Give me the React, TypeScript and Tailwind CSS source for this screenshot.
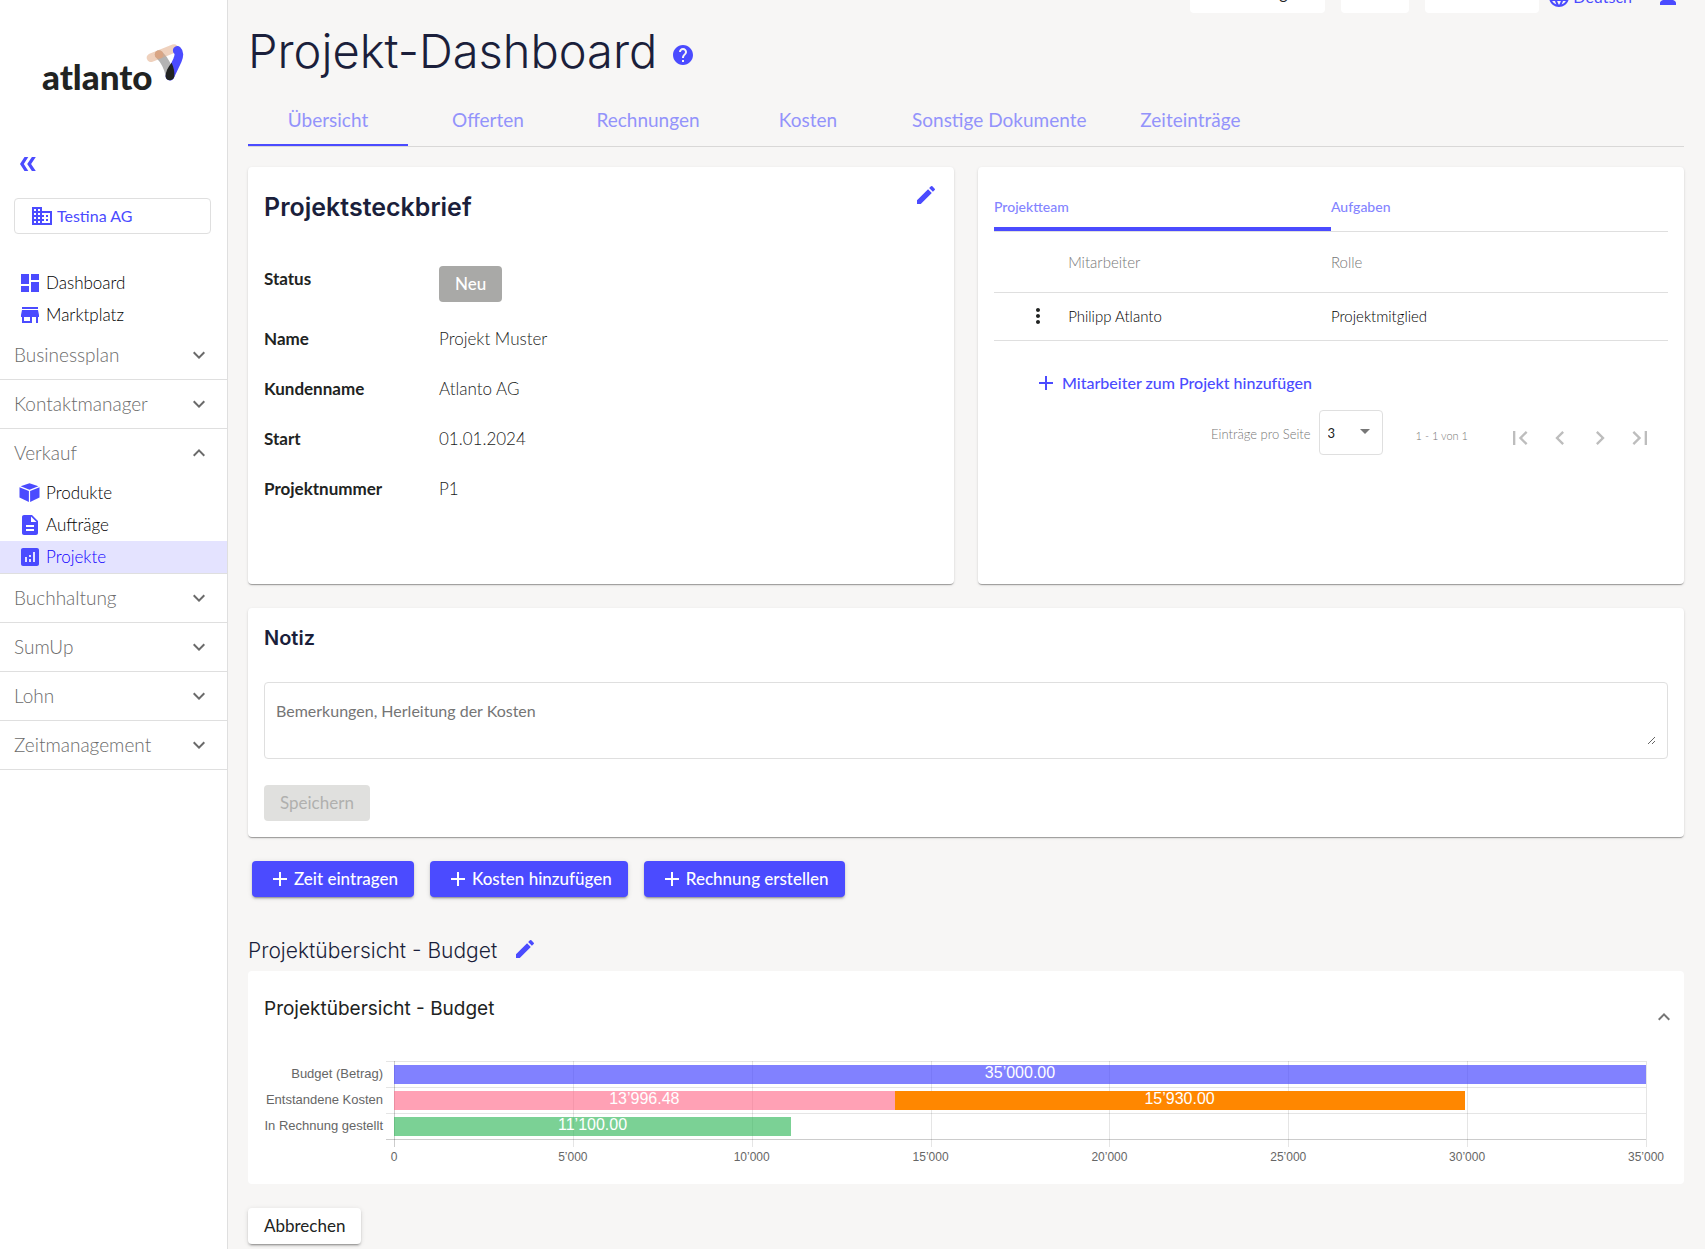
import { useState } from "react";
import type { ComponentType, ReactNode } from "react";
import {
  MdAdd,
  MdAnalytics,
  MdArrowDropDown,
  MdChevronLeft,
  MdChevronRight,
  MdDashboard,
  MdDescription,
  MdDomain,
  MdEdit,
  MdExpandLess,
  MdExpandMore,
  MdFirstPage,
  MdHelp,
  MdLanguage,
  MdLastPage,
  MdMoreVert,
  MdPerson,
  MdStore,
} from "react-icons/md";

type Icon = ComponentType<{ className?: string }>;

function CubeIcon({ className }: { className?: string }) {
  return (
    <svg viewBox="0 0 24 24" className={className} fill="currentColor" aria-hidden="true">
      <path d="M11.500 2.200 2.600 5.200 11.500 8.800l8.900-3.600z" />
      <path d="M1.500 6.200v10.400l9.400 4.400V9.900z" />
      <path d="M21.500 6.200v10.400l-9.400 4.400V9.900z" />
    </svg>
  );
}

function CollapseIcon() {
  return (
    <svg viewBox="0 0 24 24" className="h-6 w-6" fill="currentColor" aria-hidden="true">
      <path d="M8.500 5h3.800L7.800 12l4.500 7H8.500L4 12z" />
      <path d="M15.900 5h3.900l-4.700 7 4.700 7h-3.900l-4.700-7z" />
    </svg>
  );
}

function Logo() {
  return (
    <div className="flex pt-11 pl-[42px]">
      <span className="pt-3 text-[35px] leading-[40px] font-black text-[#212322]">atlanto</span>
      <svg viewBox="0 0 38 38" className="-ml-[7px] h-[38px] w-[38px]" fill="none" strokeLinecap="round" aria-hidden="true">
        <path d="M13 10.500C18.500 16 22.500 23 24 32" stroke="#b3b3b3" strokeWidth="8.600" />
        <path d="M5 13.700 28 4.500" stroke="#e0a37c" strokeOpacity="0.5" strokeWidth="8.600" />
        <path d="M13 10.500v.010" stroke="#e0a37c" strokeOpacity="0.7" strokeWidth="8.200" />
        <path d="M31.300 6.500C34 9 33 12.500 31.300 16.500L24 32" stroke="#4b4bff" strokeWidth="8.800" />
        <path d="M25.600 18.700c-3.800 4.500-6 9-6 13.500 0 5.400 7.800 5.400 8.700.3.500-4-.500-9.500-2.700-13.800z" fill="#212322" />
      </svg>
    </div>
  );
}

function NavItem({ label, icon: Icon, active }: { label: string; icon: Icon; active?: boolean }) {
  return (
    <a
      href="#"
      className={`flex h-8 items-center gap-1 pl-[18px] text-[17px] leading-6 ${
        active ? "bg-[#e4e3ff] text-[#0f00ff]" : "text-black"
      }`}
    >
      <Icon className="h-6 w-6 text-[#4b4bff]" />
      {label}
    </a>
  );
}

function NavSection({ label, open, children }: { label: string; open?: boolean; children?: ReactNode }) {
  const Chevron = open ? MdExpandLess : MdExpandMore;
  return (
    <div className="border-b border-[#dfdfdf]">
      <button className="flex h-12 w-full items-center justify-between pr-4 pl-[14px] text-[19px] leading-6 text-[#6b6b6b]">
        {label}
        <Chevron className="h-6 w-6 text-[#6a6a6a]" />
      </button>
      {children}
    </div>
  );
}

function Sidebar() {
  return (
    <aside className="w-[228px] shrink-0 border-r border-[#dfdfdf] bg-white font-light">
      <Logo />
      <button aria-label="Menü einklappen" className="mt-14 ml-4 block text-[#4b4bff]">
        <CollapseIcon />
      </button>
      <button className="mt-[22px] ml-[14px] flex h-9 w-[197px] items-center gap-[3px] rounded border border-[#dfdfdf] pl-[15px] text-base font-normal text-[#4b4bff]">
        <MdDomain className="h-6 w-6" />
        Testina AG
      </button>
      <nav className="mt-[33px]">
        <NavItem label="Dashboard" icon={MdDashboard} />
        <NavItem label="Marktplatz" icon={MdStore} />
        <NavSection label="Businessplan" />
        <NavSection label="Kontaktmanager" />
        <NavSection label="Verkauf" open>
          <NavItem label="Produkte" icon={CubeIcon} />
          <NavItem label="Aufträge" icon={MdDescription} />
          <NavItem label="Projekte" icon={MdAnalytics} active />
        </NavSection>
        <NavSection label="Buchhaltung" />
        <NavSection label="SumUp" />
        <NavSection label="Lohn" />
        <NavSection label="Zeitmanagement" />
      </nav>
    </aside>
  );
}

// Bottom edge of the toolbar, the rest is scrolled out of view
function Toolbar() {
  return (
    <header className="flex h-[13px] items-end justify-end gap-4 overflow-hidden pr-1 text-base">
      <button className="h-9 w-[135px] shrink-0 rounded bg-white px-4 pb-1">Einstellungen</button>
      <button aria-label="Hilfe" className="h-9 w-[68px] shrink-0 rounded bg-white" />
      <button aria-label="Konto" className="h-9 w-[114px] shrink-0 rounded bg-white" />
      <button className="-ml-2 flex h-8 shrink-0 items-center gap-[2px] text-[#4b4bff]">
        <MdLanguage className="h-6 w-6" />
        Deutsch
      </button>
      <button aria-label="Profil" className="ml-2 flex h-8 shrink-0 items-center text-[#4b4bff]">
        <MdPerson className="h-6 w-6" />
      </button>
    </header>
  );
}

const TABS = ["Übersicht", "Offerten", "Rechnungen", "Kosten", "Sonstige Dokumente", "Zeiteinträge"];

function Tabs() {
  const [active, setActive] = useState(TABS[0]);
  return (
    <div role="tablist" className="mt-[17px] flex border-b border-[#d9d8d7]">
      {TABS.map((tab) => (
        <button
          key={tab}
          role="tab"
          aria-selected={tab === active}
          onClick={() => setActive(tab)}
          className={`h-12 min-w-[160px] border-b-2 px-6 pb-[2px] text-[19px] leading-6 text-[#9393fb] ${
            tab === active ? "border-[#4b4bff]" : "border-transparent"
          }`}
        >
          {tab}
        </button>
      ))}
    </div>
  );
}

function Card({ className = "", children }: { className?: string; children: ReactNode }) {
  return (
    <section
      className={`rounded bg-white px-4 shadow-[0_2px_1px_-1px_rgba(0,0,0,0.2),0_1px_1px_rgba(0,0,0,0.14),0_1px_3px_rgba(0,0,0,0.12)] ${className}`}
    >
      {children}
    </section>
  );
}

const DETAILS = [
  ["Name", "Projekt Muster"],
  ["Kundenname", "Atlanto AG"],
  ["Start", "01.01.2024"],
  ["Projektnummer", "P1"],
];

function ProfileCard() {
  return (
    <Card className="pt-4 pb-[70px]">
      <div className="flex items-start justify-between">
        <h2 className="pt-2 font-[Inter] text-[25px] leading-8 font-semibold text-[#1b1f3b]">Projektsteckbrief</h2>
        <button aria-label="Steckbrief bearbeiten" className="text-[#4b4bff]">
          <MdEdit className="h-6 w-6" />
        </button>
      </div>
      <dl className="mt-[43px] grid grid-cols-[175px_1fr] text-[17px] leading-[50px]">
        <dt className="h-12 leading-[26px] font-bold">Status</dt>
        <dd className="h-12">
          <span className="block h-9 w-fit rounded bg-[#a9a9a7] px-4 leading-9 font-medium text-white">Neu</span>
        </dd>
        {DETAILS.map(([label, value]) => (
          <div key={label} className="contents">
            <dt className="font-bold">{label}</dt>
            <dd className="font-light">{value}</dd>
          </div>
        ))}
      </dl>
    </Card>
  );
}

function TeamCard() {
  return (
    <Card className="pt-8">
      <div
        role="tablist"
        className="grid grid-cols-2 border-b border-[#dfdfdf] text-sm leading-4 font-medium text-[#8484ff]"
      >
        <button role="tab" aria-selected="true" className="h-8 border-b-4 border-[#4b4bff] pb-3 text-left">
          Projektteam
        </button>
        <button role="tab" aria-selected="false" className="h-8 border-b-4 border-transparent pb-3 text-left">
          Aufgaben
        </button>
      </div>
      <table className="w-full table-fixed text-left text-[15px] leading-5 font-light">
        <colgroup>
          <col className="w-[11%]" />
          <col className="w-[39%]" />
          <col className="w-[50%]" />
        </colgroup>
        <thead>
          <tr className="h-[60px] border-b border-[#dfdfdf] text-[#777]">
            <th aria-label="Aktionen" />
            <th className="font-light">Mitarbeiter</th>
            <th className="font-light">Rolle</th>
          </tr>
        </thead>
        <tbody>
          <tr className="h-12 border-b border-[#dfdfdf]">
            <td>
              <button aria-label="Aktionen öffnen" className="ml-8 block">
                <MdMoreVert className="h-6 w-6" />
              </button>
            </td>
            <td className="text-black">Philipp Atlanto</td>
            <td className="text-black">Projektmitglied</td>
          </tr>
        </tbody>
      </table>
      <button className="mt-6 ml-10 flex h-9 items-center gap-1 text-base font-medium text-[#4b4bff]">
        <MdAdd className="h-6 w-6" />
        Mitarbeiter zum Projekt hinzufügen
      </button>
      <div className="mt-[9px] flex items-center justify-end pr-2 font-light text-[#777]">
        <label htmlFor="page-size" className="pt-1 text-[13px] leading-5">
          Einträge pro Seite
        </label>
        <div className="relative ml-2">
          <select
            id="page-size"
            defaultValue="3"
            className="h-[45px] w-16 appearance-none rounded border border-[#dfdfdf] bg-white pt-1 pl-2 text-[13px] font-normal text-[#212322]"
          >
            <option>3</option>
            <option>5</option>
            <option>10</option>
          </select>
          <MdArrowDropDown className="pointer-events-none absolute top-[9px] right-[6px] h-6 w-6" />
        </div>
        <span className="mr-8 ml-[33px] pt-2 text-[11px] leading-5">1 - 1 von 1</span>
        {[
          { label: "Erste Seite", icon: MdFirstPage },
          { label: "Vorherige Seite", icon: MdChevronLeft },
          { label: "Nächste Seite", icon: MdChevronRight },
          { label: "Letzte Seite", icon: MdLastPage },
        ].map(({ label, icon: Icon }) => (
          <button key={label} aria-label={label} className="flex h-10 w-10 items-center justify-center pt-3 text-[#bdbdbd]">
            <Icon className="h-7 w-7" />
          </button>
        ))}
      </div>
    </Card>
  );
}

function NoteCard() {
  return (
    <Card className="mt-6 pt-4 pb-4">
      <h2 className="font-[Inter] text-xl leading-7 font-semibold text-[#1b1f3b]">Notiz</h2>
      <div className="mt-[30px] rounded border border-[#dfdfdf] px-[11px] pt-4 pb-[13px]">
        <textarea
          aria-label="Notiz"
          placeholder="Bemerkungen, Herleitung der Kosten"
          className="block h-[46px] w-full resize-y text-base leading-6 placeholder:text-[#757575]"
        />
      </div>
      <button disabled className="mt-[26px] h-9 rounded bg-[#e0e0de] px-4 text-[17px] leading-6 text-[#b0b0ae]">
        Speichern
      </button>
    </Card>
  );
}

function ActionButton({ label }: { label: string }) {
  return (
    <button className="flex h-9 items-center gap-[2px] rounded bg-[#4b4bff] px-4 text-[17px] leading-6 font-medium text-white shadow-[0_3px_1px_-2px_rgba(0,0,0,0.2),0_2px_2px_rgba(0,0,0,0.14),0_1px_5px_rgba(0,0,0,0.12)]">
      <MdAdd className="h-6 w-6" />
      {label}
    </button>
  );
}

const MAX = 35000;
const TICKS = [0, 5000, 10000, 15000, 20000, 25000, 30000, 35000];
const ROWS = [
  { label: "Budget (Betrag)", bars: [{ value: 35000, text: "35’000.00", color: "bg-[#4b4bff]/70" }] },
  {
    label: "Entstandene Kosten",
    bars: [
      { value: 13996.48, text: "13’996.48", color: "bg-[#ff6384]/60" },
      { value: 15930, text: "15’930.00", color: "bg-[#ff8700]" },
    ],
  },
  { label: "In Rechnung gestellt", bars: [{ value: 11100, text: "11’100.00", color: "bg-[#34b85c]/65" }] },
];

function formatTick(value: number) {
  return value === 0 ? "0" : `${value / 1000}’000`;
}

function BudgetChart() {
  return (
    <div className="grid grid-cols-[119px_1fr] gap-x-[11px] pr-[22px] font-['Liberation_Sans',Arial,sans-serif] text-[#666]">
      <div className="text-[13px]">
        {ROWS.map((row) => (
          <div key={row.label} className="h-[26px] text-right leading-[26px]">
            {row.label}
          </div>
        ))}
      </div>
      <div className="relative">
        {/* grid lines */}
        {[0, 1, 2, 3].map((line) => (
          <div
            key={line}
            className={`absolute right-0 -left-2 h-px ${line === 3 ? "bg-black/20" : "bg-black/10"}`}
            style={{ top: line * 26 }}
          />
        ))}
        {TICKS.map((tick) => (
          <div
            key={tick}
            className={`absolute top-0 h-[86px] w-px ${tick === 0 ? "bg-black/20" : "bg-black/10"}`}
            style={{ left: `${(tick / MAX) * 100}%` }}
          />
        ))}
        {ROWS.map((row) => (
          <div key={row.label} className="relative flex h-[26px] items-center pt-px">
            {row.bars.map((bar) => (
              <div
                key={bar.text}
                className={`h-[19px] text-center text-base leading-4 text-white ${bar.color}`}
                style={{ width: `${(bar.value / MAX) * 100}%` }}
              >
                {bar.text}
              </div>
            ))}
          </div>
        ))}
        <div className="relative mt-[10px] h-4 text-xs">
          {TICKS.map((tick) => (
            <span
              key={tick}
              className="absolute w-16 -translate-x-1/2 text-center leading-4"
              style={{ left: `${(tick / MAX) * 100}%` }}
            >
              {formatTick(tick)}
            </span>
          ))}
        </div>
      </div>
    </div>
  );
}

export default function App() {
  return (
    <div className="flex min-h-screen overflow-x-hidden bg-[#f7f6f5] font-[Lato,'Open_Sans',sans-serif] text-[#212322]">
      <Sidebar />
      <main className="min-w-0 flex-1 pr-[21px] pl-5">
        <Toolbar />
        <div className="mt-2 flex items-center gap-[14px]">
          <h1 className="font-[Inter] text-[47px] leading-[60px] font-light text-[#1b1f3b]">Projekt-Dashboard</h1>
          <button aria-label="Hilfe anzeigen" className="pt-2 text-[#4b4bff]">
            <MdHelp className="h-6 w-6" />
          </button>
        </div>
        <Tabs />
        <div className="mt-5 grid grid-cols-2 gap-6">
          <ProfileCard />
          <TeamCard />
        </div>
        <NoteCard />
        <div className="mt-6 flex gap-4 pl-1">
          <ActionButton label="Zeit eintragen" />
          <ActionButton label="Kosten hinzufügen" />
          <ActionButton label="Rechnung erstellen" />
        </div>
        <div className="mt-9 flex items-center gap-4">
          <h2 className="font-[Inter] text-[21px] leading-9 font-light text-[#1b1f3b]">Projektübersicht - Budget</h2>
          <button aria-label="Budget bearbeiten" className="pb-1 text-[#4b4bff]">
            <MdEdit className="h-6 w-6" />
          </button>
        </div>
        <section className="mt-[2px] rounded bg-white px-4 pb-[19px]">
          <div className="flex h-[90px] items-start justify-between">
            <h3 className="font-[Inter] text-[19px] leading-[76px]">Projektübersicht - Budget</h3>
            <button aria-label="Zuklappen" className="-mr-2 pt-[34px] text-[#757575]">
              <MdExpandLess className="h-6 w-6" />
            </button>
          </div>
          <BudgetChart />
        </section>
        <button className="mt-6 mb-1 h-9 rounded bg-white px-4 text-[17px] leading-6 shadow-[0_3px_1px_-2px_rgba(0,0,0,0.2),0_2px_2px_rgba(0,0,0,0.14),0_1px_5px_rgba(0,0,0,0.12)]">
          Abbrechen
        </button>
      </main>
    </div>
  );
}
